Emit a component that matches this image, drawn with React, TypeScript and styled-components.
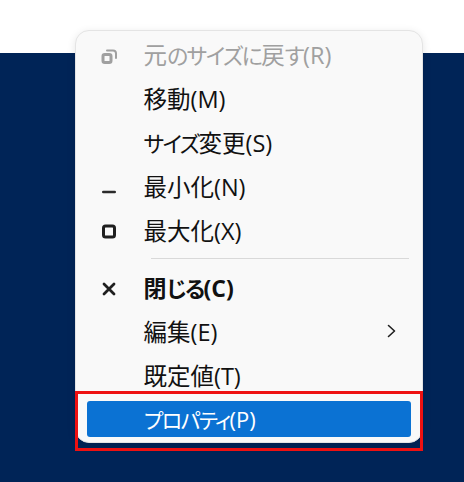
import React from "react";
import styled, { createGlobalStyle } from "styled-components";

const Global = createGlobalStyle`
  html, body { margin: 0; padding: 0; background: #ffffff; }
  body { font-family: "Open Sans", "Noto Sans CJK JP", sans-serif; }
  #root { width: 464px; height: 482px; overflow: hidden; }
`;

const Stage = styled.div`
  position: relative;
  width: 464px;
  height: 482px;
  padding: 30px 0 0 75px;
  box-sizing: border-box;
  overflow: hidden;
  background: linear-gradient(#ffffff 53px, #002457 53px);
`;

const Menu = styled.div`
  width: 348px;
  height: 413px;
  box-sizing: border-box;
  padding-top: 3px;
  background: #f9f9f9;
  border: 1.5px solid #e4e4e4;
  border-radius: 14px;
  box-shadow: 0 2px 8px rgba(0, 0, 0, 0.1);
  display: flex;
  flex-direction: column;
`;

const Item = styled.div<{ $disabled?: boolean; $strong?: boolean }>`
  height: 44px;
  flex: none;
  display: flex;
  align-items: center;
  padding: 0 24px 0 24px;
  font-size: ${(p) => (p.$strong ? "23px" : "23.5px")};
  font-feature-settings: "palt";
  font-weight: ${(p) => (p.$strong ? 700 : 400)};
  color: ${(p) => (p.$disabled ? "#a0a0a0" : "#111111")};
`;

const IconSlot = styled.span`
  width: 43.5px;
  flex: none;
  display: flex;
  align-items: center;
`;

const Label = styled.span`
  flex: 1;
  white-space: nowrap;
  padding-bottom: 4px;
`;

const Kana = styled.span<{ $small?: boolean }>`
  font-size: ${(p) => (p.$small ? "21px" : "22px")};
  letter-spacing: -1.6px;
`;

const Separator = styled.div`
  height: 1px;
  flex: none;
  margin: 4px 13px 8px 75px;
  background: #d9d9d9;
`;

const Selected = styled.div`
  height: 36px;
  margin: 2px 11px 0;
  padding-left: 57px;
  box-sizing: border-box;
  flex: none;
  display: flex;
  align-items: center;
  border-radius: 3px;
  background: #0b72d3;
  color: #ffffff;
  font-size: 22px;
  font-feature-settings: "palt";
  white-space: nowrap;
`;

const Highlight = styled.div`
  position: absolute;
  left: 75px;
  top: 391px;
  width: 348px;
  height: 60px;
  box-sizing: border-box;
  border: 3px solid #ee1111;
  pointer-events: none;
`;

const Glyph = styled.svg`
  display: block;
  width: 18px;
  height: 18px;
  fill: none;
  stroke-linecap: round;
  stroke-linejoin: round;
`;

export default function App() {
  return (
    <Stage>
      <Global />
      <Menu>
        <Item $disabled>
          <IconSlot>
            <Glyph viewBox="0 0 18 18" stroke="#a0a0a0" strokeWidth="3">
              <rect x="3" y="7.500" width="8" height="8" rx="1.800" />
              <path d="M7 3.500h6a3 3 0 0 1 3 3V11" strokeWidth="2" />
            </Glyph>
          </IconSlot>
          <Label>元<Kana>のサイズに</Kana>戻<Kana>す</Kana>(R)</Label>
        </Item>
        <Item>
          <IconSlot />
          <Label>移動(M)</Label>
        </Item>
        <Item>
          <IconSlot />
          <Label><Kana>サイズ</Kana>変更(S)</Label>
        </Item>
        <Item>
          <IconSlot>
            <Glyph viewBox="0 0 18 18" stroke="#2b2b2b" strokeWidth="2.600">
              <path d="M3.300 13h11.400" />
            </Glyph>
          </IconSlot>
          <Label>最小化(N)</Label>
        </Item>
        <Item>
          <IconSlot>
            <Glyph viewBox="0 0 18 18" stroke="#1f1f1f" strokeWidth="3">
              <rect x="3.500" y="3" width="11" height="11" rx="2" />
            </Glyph>
          </IconSlot>
          <Label>最大化(X)</Label>
        </Item>
        <Separator />
        <Item $strong>
          <IconSlot>
            <Glyph viewBox="0 0 18 18" stroke="#1f1f1f" strokeWidth="2.800">
              <path d="M4 4l10 10M14 4L4 14" />
            </Glyph>
          </IconSlot>
          <Label>閉<Kana>じる</Kana>(C)</Label>
        </Item>
        <Item>
          <IconSlot />
          <Label>編集(E)</Label>
          <Glyph viewBox="0 0 18 18" stroke="#1f1f1f" strokeWidth="1.600">
            <path d="M8.500 1.500L14.500 7l-6 5.500" />
          </Glyph>
        </Item>
        <Item>
          <IconSlot />
          <Label>既定値(T)</Label>
        </Item>
        <Selected><Kana $small>プロパティ</Kana>(P)</Selected>
      </Menu>
      <Highlight />
    </Stage>
  );
}
